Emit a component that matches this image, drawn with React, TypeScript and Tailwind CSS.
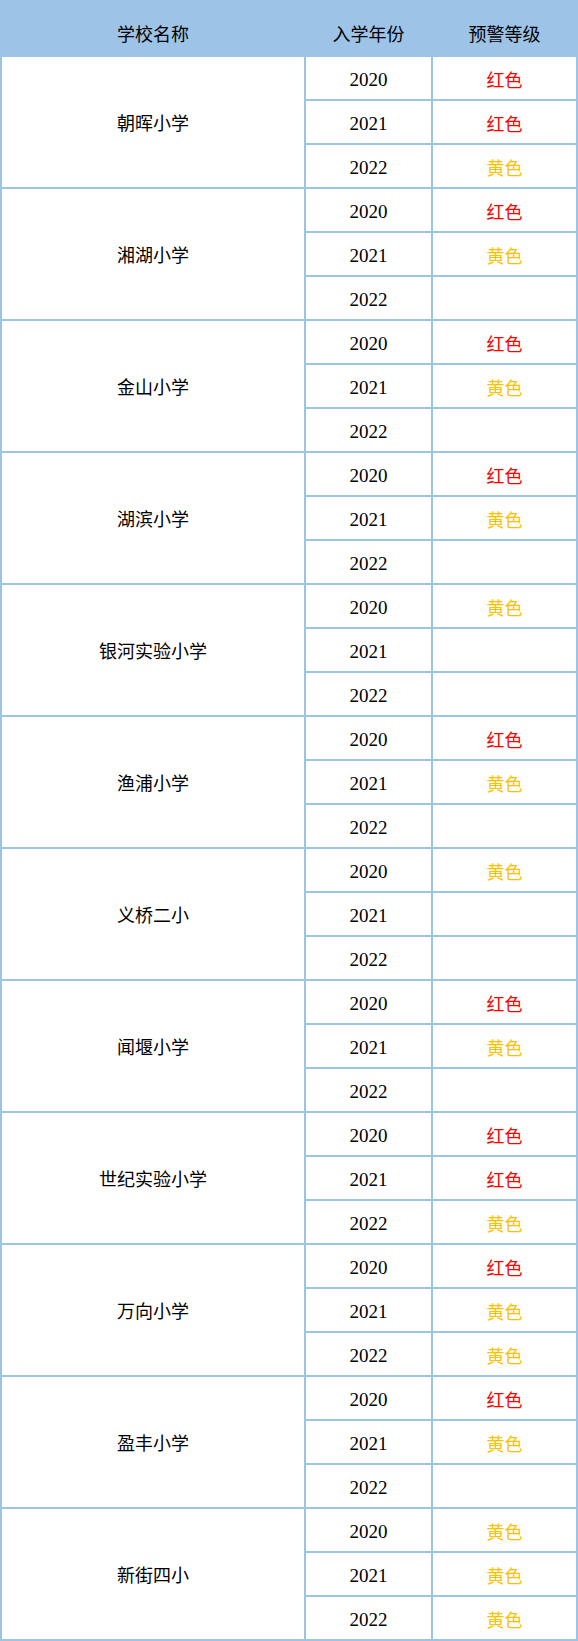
import React from 'react';

type Level = '红色' | '黄色' | '';

const schools: { name: string; levels: Level[] }[] = [
  { name: '朝晖小学', levels: ['红色', '红色', '黄色'] },
  { name: '湘湖小学', levels: ['红色', '黄色', ''] },
  { name: '金山小学', levels: ['红色', '黄色', ''] },
  { name: '湖滨小学', levels: ['红色', '黄色', ''] },
  { name: '银河实验小学', levels: ['黄色', '', ''] },
  { name: '渔浦小学', levels: ['红色', '黄色', ''] },
  { name: '义桥二小', levels: ['黄色', '', ''] },
  { name: '闻堰小学', levels: ['红色', '黄色', ''] },
  { name: '世纪实验小学', levels: ['红色', '红色', '黄色'] },
  { name: '万向小学', levels: ['红色', '黄色', '黄色'] },
  { name: '盈丰小学', levels: ['红色', '黄色', ''] },
  { name: '新街四小', levels: ['黄色', '黄色', '黄色'] },
];

const years = ['2020', '2021', '2022'];

const cjk = "font-['Noto_Sans_CJK_SC',sans-serif]";
const num = "font-['Liberation_Serif','Noto_Sans_CJK_SC',serif]";

export default function App() {
  return (
    <div className="w-[578px] bg-[#9dc3e6] px-[2px] pb-[2px] text-black">
      <div className="grid grid-cols-[302px_125px_143px] grid-rows-[55px] auto-rows-[42px] gap-[2px]">
        {/* Header */}
        <div className={`flex items-center justify-center pt-[11px] text-[18px] ${cjk}`}>学校名称</div>
        <div className={`flex items-center justify-center pt-[11px] text-[18px] ${cjk}`}>入学年份</div>
        <div className={`flex items-center justify-center pt-[11px] text-[18px] ${cjk}`}>预警等级</div>

        {schools.map((s) => (
          <React.Fragment key={s.name}>
            <div className={`row-span-3 flex items-center justify-center bg-white text-[18px] ${cjk}`}>
              {s.name}
            </div>
            {years.map((y, i) => (
              <React.Fragment key={y}>
                <div className={`flex items-center justify-center bg-white pt-[5px] text-[19px] ${num}`}>{y}</div>
                <div
                  className={`flex items-center justify-center bg-white pt-[2px] text-[18px] ${cjk} ${
                    s.levels[i] === '红色' ? 'text-[#ff0000]' : 'text-[#ffc000]'
                  }`}
                >
                  {s.levels[i]}
                </div>
              </React.Fragment>
            ))}
          </React.Fragment>
        ))}
      </div>
    </div>
  );
}
